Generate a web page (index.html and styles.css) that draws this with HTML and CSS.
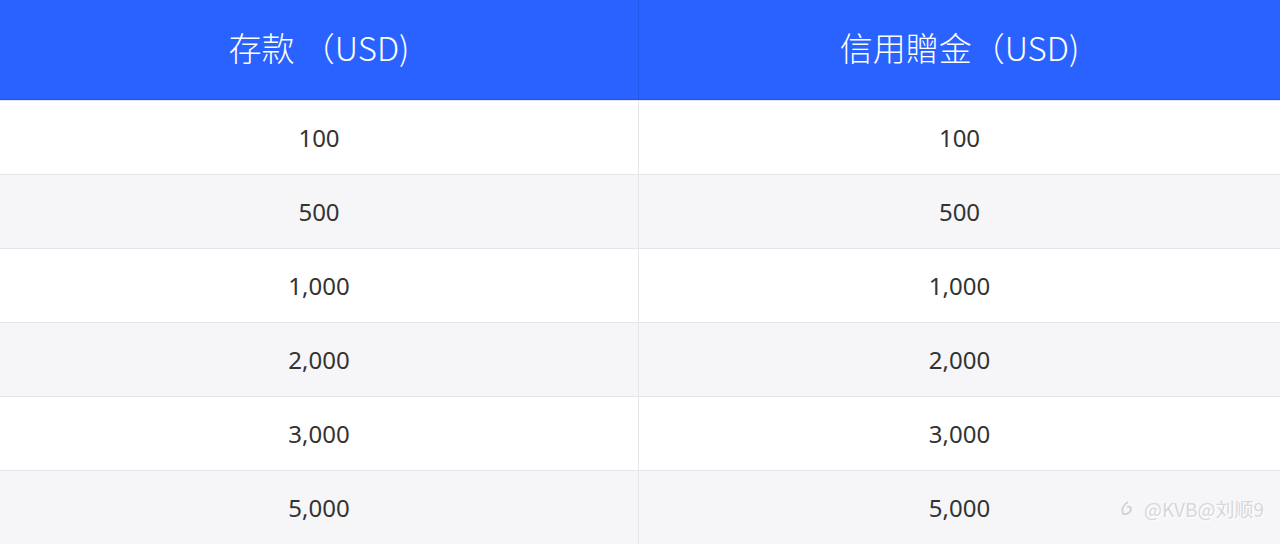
FILE: index.html
```html
<!DOCTYPE html>
<html lang="zh-Hant">
<head>
<meta charset="utf-8">
<link rel="stylesheet" href="styles.css">
</head>
<body>
<div class="table">
  <div class="row head">
    <div class="cell">存款 （USD)</div>
    <div class="cell">信用贈金（USD)</div>
  </div>
  <div class="row"><div class="cell">100</div><div class="cell">100</div></div>
  <div class="row alt"><div class="cell">500</div><div class="cell">500</div></div>
  <div class="row"><div class="cell">1,000</div><div class="cell">1,000</div></div>
  <div class="row alt"><div class="cell">2,000</div><div class="cell">2,000</div></div>
  <div class="row"><div class="cell">3,000</div><div class="cell">3,000</div></div>
  <div class="row alt"><div class="cell">5,000</div><div class="cell">5,000</div></div>
</div>
<div class="mark">
  <svg width="18" height="18" viewBox="0 0 18 18"><path d="M10 2 C6 4 3 9 5 14 M5 14 C9 15 13 12 13 9 C13 7 11 6 9 7" fill="none" stroke="#cfcfd4" stroke-width="1.8"/></svg>
  <span>@KVB@刘顺9</span>
</div>
</body>
</html>
```
FILE: styles.css
```css
html, body { margin: 0; padding: 0; }
body {
  width: 1280px;
  height: 544px;
  overflow: hidden;
  background: #fff;
  font-family: "Noto Sans", "Noto Sans CJK TC", sans-serif;
  position: relative;
}
.table { display: flex; flex-direction: column; }
.row {
  display: grid;
  grid-template-columns: 639px 1fr;
  height: 73px;
  border-top: 1px solid #e6e6ea;
  background: #fff;
}
.row.alt { background: #f6f6f9; }
.cell {
  display: flex;
  align-items: center;
  justify-content: center;
  font-size: 24px;
  color: #333;
  border-right: 1px solid #e6e6ea;
}
.cell:last-child { border-right: none; }
.row.head {
  height: 99px;
  border-top: none;
  border-bottom: 1px solid #2b54c8;
  background: #2962ff;
}
.head .cell {
  color: #fff;
  font-family: "Noto Sans CJK TC", sans-serif;
  font-weight: 300;
  font-size: 33px;
  border-right: 1px solid #2459ee;
  padding-bottom: 6px;
}
.head .cell:last-child { border-right: none; }
.mark {
  position: absolute;
  right: 16px;
  bottom: 22px;
  display: flex;
  align-items: center;
  gap: 8px;
  color: #d6d6db;
  font-family: "Noto Sans CJK SC", sans-serif;
  font-size: 19px;
  text-shadow: 1px 1px 0 #fff;
}
```
